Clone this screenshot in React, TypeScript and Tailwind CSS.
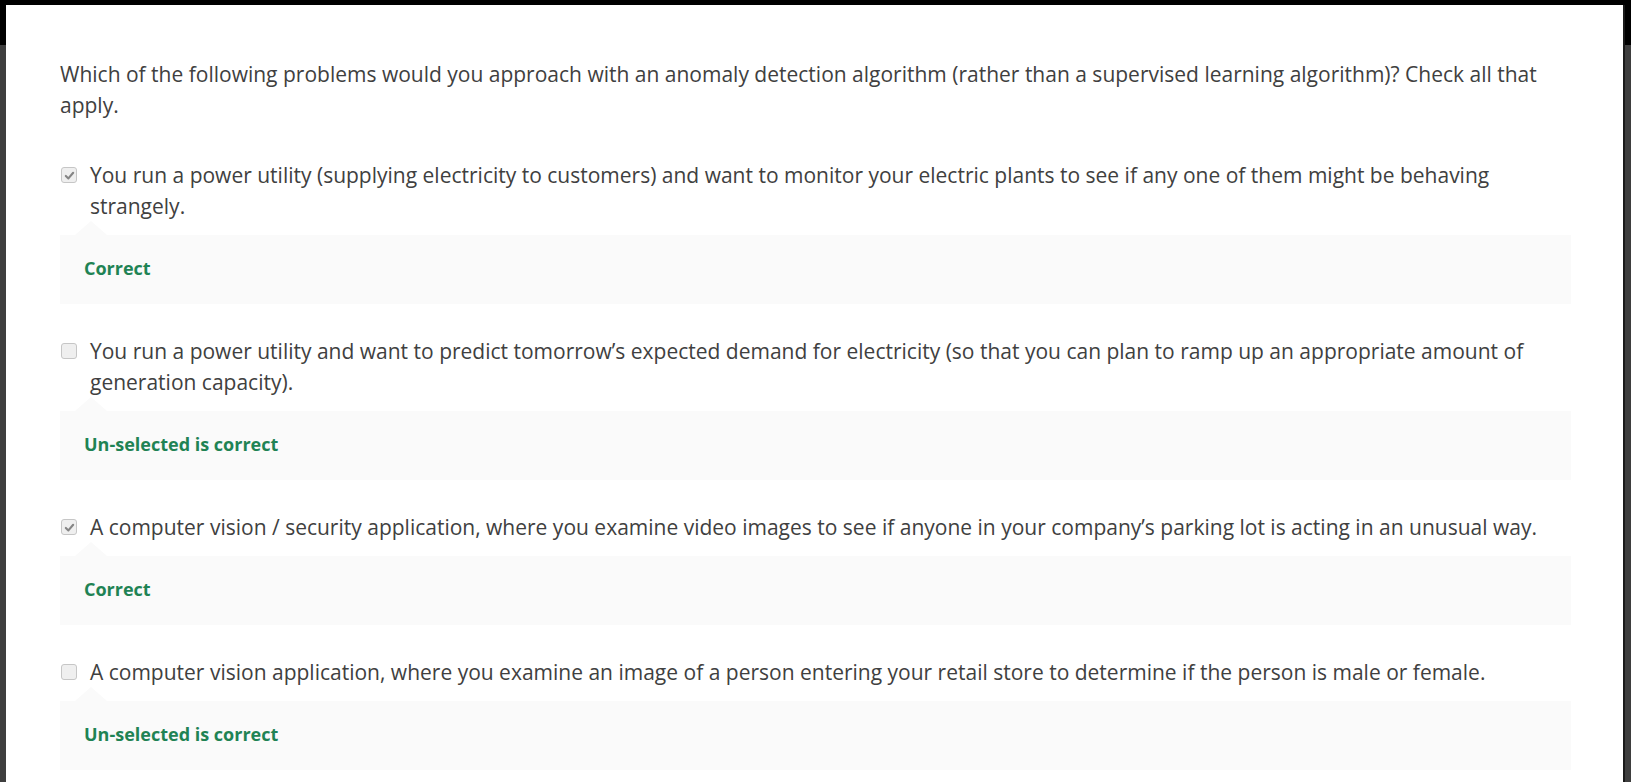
import React from 'react';

interface Choice {
  text: string;
  checked: boolean;
  feedback: string;
}

const choices: Choice[] = [
  {
    text: 'You run a power utility (supplying electricity to customers) and want to monitor your electric plants to see if any one of them might be behaving strangely.',
    checked: true,
    feedback: 'Correct',
  },
  {
    text: 'You run a power utility and want to predict tomorrow\u2019s expected demand for electricity (so that you can plan to ramp up an appropriate amount of generation capacity).',
    checked: false,
    feedback: 'Un-selected is correct',
  },
  {
    text: 'A computer vision / security application, where you examine video images to see if anyone in your company\u2019s parking lot is acting in an unusual way.',
    checked: true,
    feedback: 'Correct',
  },
  {
    text: 'A computer vision application, where you examine an image of a person entering your retail store to determine if the person is male or female.',
    checked: false,
    feedback: 'Un-selected is correct',
  },
];

const DisabledCheckbox = ({ checked }: { checked: boolean }) => (
  <div className="mt-[7px] ml-px flex h-[16px] w-[16px] shrink-0 items-center justify-center rounded-[3px] border border-[#c6c6c6] bg-[#efefef]">
    {checked && (
      <svg width="11" height="11" viewBox="0 0 12 12">
        <path d="M2 6.5 L4.8 9.2 L10 3" fill="none" stroke="#858585" strokeWidth="2.3" strokeLinecap="round" strokeLinejoin="round" />
      </svg>
    )}
  </div>
);

const ChoiceRow = ({ choice, first }: { choice: Choice; first: boolean }) => (
  <div className={first ? 'mt-[39px]' : 'mt-[32px]'}>
    <div className="flex gap-[13px]">
      <DisabledCheckbox checked={choice.checked} />
      <p>{choice.text}</p>
    </div>
    {/* feedback box with the little pointer */}
    <div className="relative mt-[13px] flex h-[69px] items-center bg-[#fafafa] pb-[4px] pl-[24px]">
      <div className="absolute -top-[14px] left-[15px] h-0 w-0 border-r-[16px] border-b-[14px] border-l-[16px] border-r-transparent border-b-[#fafafa] border-l-transparent" />
      <span className="text-[18px] font-bold leading-none text-[#1f8354]">{choice.feedback}</span>
    </div>
  </div>
);

export default function App() {
  return (
    <div className="relative h-[782px] w-full overflow-hidden bg-[#3e3e3e]" style={{ fontFamily: '"Open Sans", "Noto Sans", sans-serif' }}>
      <div className="h-[45px] bg-black" />

      <div className="absolute top-[5px] right-[6px] bottom-0 left-[6px] border-r-2 border-[#1a1a1a] bg-white">
        <div className="pt-[54px] pr-[52px] pl-[54px] text-[21px] leading-[31px] text-[#404040]">
          <p>
            Which of the following problems would you approach with an anomaly detection algorithm (rather than a supervised learning algorithm)? Check all that apply.
          </p>
          {choices.map((c, i) => (
            <ChoiceRow key={i} choice={c} first={i === 0} />
          ))}
        </div>
      </div>
    </div>
  );
}
